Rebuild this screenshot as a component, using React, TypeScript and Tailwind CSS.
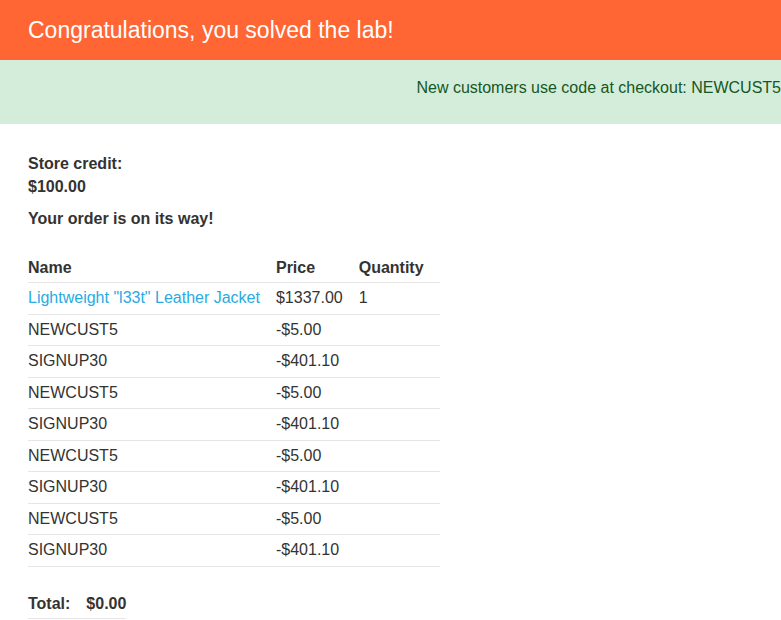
const rows: [string, string, string, boolean][] = [
  ['Lightweight "l33t" Leather Jacket', "$1337.00", "1", true],
  ["NEWCUST5", "-$5.00", "", false],
  ["SIGNUP30", "-$401.10", "", false],
  ["NEWCUST5", "-$5.00", "", false],
  ["SIGNUP30", "-$401.10", "", false],
  ["NEWCUST5", "-$5.00", "", false],
  ["SIGNUP30", "-$401.10", "", false],
  ["NEWCUST5", "-$5.00", "", false],
  ["SIGNUP30", "-$401.10", "", false],
];

export default function App() {
  return (
    <div className="min-h-[620px] bg-white font-['Liberation_Sans',Arial,sans-serif] text-[16px] text-[#333332]">
      <div className="flex h-[60px] items-center bg-[#ff6633] px-[28px]">
        <h4 className="text-[23px] text-white">Congratulations, you solved the lab!</h4>
      </div>
      <div className="flex h-[64px] items-center justify-end overflow-hidden whitespace-nowrap bg-[#d4edda] pb-[8px] text-[#155724]">
        <p>New customers use code at checkout: NEWCUST5</p>
      </div>
      <div className="px-[28px] pt-[28px]">
        <p className="font-bold leading-[23px]">Store credit:</p>
        <p className="font-bold leading-[23px]">$100.00</p>
        <p className="mt-[9px] font-bold leading-[23px]">Your order is on its way!</p>
        <table className="mt-[22px] border-collapse">
          <thead>
            <tr className="border-b border-[#e6e6e6]">
              <th className="pt-[6px] pb-[4px] pr-[16px] text-left font-bold leading-[20px]">Name</th>
              <th className="pt-[6px] pb-[4px] pr-[16px] text-left font-bold leading-[20px]">Price</th>
              <th className="w-[81px] pt-[6px] pb-[4px] pr-[16px] text-left font-bold leading-[20px]">Quantity</th>
            </tr>
          </thead>
          <tbody>
            {rows.map(([name, price, qty, link], i) => (
              <tr key={i} className="border-b border-[#e6e6e6]">
                <td className="py-[5px] pr-[16px] leading-[20.5px]">
                  {link ? <a className="text-[#29abe2]" href="#">{name}</a> : name}
                </td>
                <td className="py-[5px] pr-[16px] leading-[20.5px]">{price}</td>
                <td className="py-[5px] pr-[16px] leading-[20.5px]">{qty}</td>
              </tr>
            ))}
          </tbody>
        </table>
        <table className="mt-[21px] border-collapse">
          <tbody>
            <tr className="border-b border-[#e6e6e6]">
              <th className="pt-[6px] pb-[4px] pr-[16px] text-left font-bold leading-[20px]">Total:</th>
              <th className="pt-[6px] pb-[4px] text-left font-bold leading-[20px]">$0.00</th>
            </tr>
          </tbody>
        </table>
      </div>
    </div>
  );
}
